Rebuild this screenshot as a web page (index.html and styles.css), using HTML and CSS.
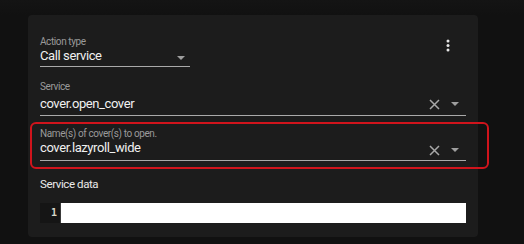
FILE: index.html
```html
<!DOCTYPE html>
<html>
<head>
<meta charset="utf-8">
<link rel="stylesheet" href="styles.css">
</head>
<body>
<div class="page">
  <div class="card">
    <div class="top-row">
      <div class="field field-select">
        <div class="label">Action type</div>
        <div class="value-row">
          <span class="value">Call service</span>
          <svg class="arrow arrow-low" width="8" height="4" viewBox="0 0 8 4"><path d="M0 0 L8 0 L4 4 Z" fill="#9e9e9e"/></svg>
        </div>
      </div>
      <svg class="menu" width="4" height="13" viewBox="0 0 4 13"><circle cx="2" cy="2" r="1.5" fill="#e6e6e6"/><circle cx="2" cy="6.5" r="1.5" fill="#e6e6e6"/><circle cx="2" cy="11" r="1.5" fill="#e6e6e6"/></svg>
    </div>

    <div class="field field-service">
      <div class="label">Service</div>
      <div class="value-row value-row-service">
        <span class="value">cover.open_cover</span>
        <svg class="clear" width="11" height="11" viewBox="0 0 11 11"><path d="M1 1 L10 10 M10 1 L1 10" stroke="#a8a8a8" stroke-width="1.5" fill="none"/></svg>
        <svg class="arrow" width="8" height="4" viewBox="0 0 8 4"><path d="M0 0 L8 0 L4 4 Z" fill="#9e9e9e"/></svg>
      </div>
    </div>

    <div class="highlight">
      <div class="field field-entity">
        <div class="label">Name(s) of cover(s) to open.</div>
        <div class="value-row value-row-entity">
          <span class="value">cover.lazyroll_wide</span>
          <svg class="clear clear-low" width="11" height="11" viewBox="0 0 11 11"><path d="M1 1 L10 10 M10 1 L1 10" stroke="#a8a8a8" stroke-width="1.5" fill="none"/></svg>
          <svg class="arrow arrow-low" width="8" height="4" viewBox="0 0 8 4"><path d="M0 0 L8 0 L4 4 Z" fill="#9e9e9e"/></svg>
        </div>
      </div>
    </div>

    <div class="section-title">Service data</div>

    <div class="code">
      <div class="gutter">1</div>
      <div class="editor"></div>
    </div>
  </div>
</div>
</body>
</html>
```
FILE: styles.css
```css
html, body {
  margin: 0;
  padding: 0;
  background: #111111;
  font-family: Roboto, "Liberation Sans", sans-serif;
}

.page {
  padding: 15px 0 0 28px;
  height: 229px;
  background: linear-gradient(#141414, #111111 15px);
}

.card {
  width: 450px;
  height: 222px;
  box-sizing: border-box;
  padding: 21px 12px 0 12px;
  background: #1c1c1c;
  border-radius: 4px;
  display: flex;
  flex-direction: column;
}

.top-row {
  display: flex;
  justify-content: space-between;
  align-items: flex-start;
}

.menu {
  margin-top: 3px;
  margin-right: 16px;
}

.field {
  display: flex;
  flex-direction: column;
}

.field-select {
  width: 150px;
}

.label {
  font-size: 10px;
  line-height: 12px;
  letter-spacing: -0.4px;
  color: #9a9a9a;
}

.value-row {
  display: flex;
  align-items: center;
  height: 16px;
  padding-bottom: 2px;
  border-bottom: 1px solid #a9a9a9;
  padding-right: 5px;
}

.value {
  flex: 1;
  font-size: 13px;
  line-height: 16px;
  letter-spacing: -0.4px;
  color: #f0f0f0;
  white-space: nowrap;
}

.arrow-low {
  margin-top: 3px;
}

.field-service {
  margin-top: 14px;
}

.value-row-service {
  margin-top: 3px;
  padding-bottom: 3px;
  padding-right: 7px;
}

.clear {
  margin-right: 11px;
}

.clear-low {
  margin-top: 4px;
}

.highlight {
  margin: 6px -23px 0 -10px;
  padding: 4px 21px 6px 8px;
  border: 2px solid #d0141c;
  border-radius: 6px;
}

.value-row-entity {
  padding-bottom: 4px;
  padding-right: 7px;
}

.section-title {
  margin-top: 7px;
  font-size: 11.5px;
  line-height: 16px;
  letter-spacing: -0.4px;
  color: #eaeaea;
}

.code {
  margin-top: 11px;
  display: flex;
  height: 20px;
}

.gutter {
  width: 21px;
  box-sizing: border-box;
  padding-right: 3px;
  background: #151515;
  color: #d6d6c8;
  font-family: "DejaVu Sans Mono", "Liberation Mono", monospace;
  font-weight: bold;
  font-size: 10px;
  line-height: 20px;
  text-align: right;
  border-right: 1px solid #3a3a3a;
}

.editor {
  flex: 1;
  background: #ffffff;
}
```
